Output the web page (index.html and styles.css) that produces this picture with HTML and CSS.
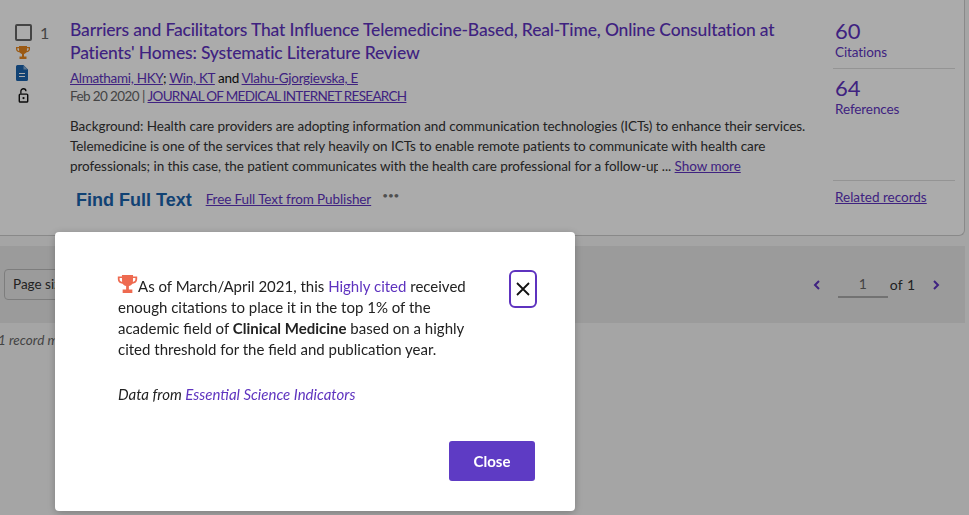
FILE: index.html
```html
<!DOCTYPE html>
<html lang="en">
<head>
    <meta charset="UTF-8">
    <meta name="viewport" content="width=device-width, initial-scale=1.0">
    <title>Highly cited record</title>
    <link rel="stylesheet" href="styles.css">
</head>
<body>
    <div class="record">
        <div class="record-marks">
            <div class="mark-top">
                <span class="checkbox"></span>
                <span class="record-no">1</span>
            </div>
            <svg class="mark-icon" width="14" height="13" viewBox="0 0 14 13"><path fill="#e8871e" d="M3 0h8v1h3v2c0 2-1.500 3-3.400 3.300C10 7.200 9 7.800 8 8v2.500h2.500V13h-7v-2.500H6V8c-1-.2-2-.8-2.600-1.700C1.500 6 0 5 0 3V1h3zM1.300 2.200V3c0 1 .7 1.700 1.800 2L3 2.200zM12.700 2.200H11L10.900 5c1.100-.3 1.800-1 1.800-2z"/></svg>
            <svg class="mark-icon" width="12" height="16" viewBox="0 0 12 16"><path fill="#1a63ad" d="M1.500 0H7.500L12 4.500V14.500A1.500 1.500 0 0 1 10.500 16H1.500A1.500 1.500 0 0 1 0 14.500V1.500A1.500 1.500 0 0 1 1.500 0z"/><path fill="none" stroke="#fff" stroke-width="1.200" d="M3 8.500H9M3 11.500H9"/><path fill="#fff" d="M7.500 0.500V4.500H11.500z" opacity=".5"/></svg>
            <svg class="mark-icon mark-lock" width="11" height="15" viewBox="0 0 11 16"><path fill="none" stroke="#111" stroke-width="1.400" d="M2.700 6V3.500a2.700 2.700 0 0 1 5.400 0"/><rect x="1" y="6.500" width="9" height="8.500" rx="1" fill="none" stroke="#111" stroke-width="1.500"/><circle cx="5.500" cy="10.700" r="1.200" fill="#111"/></svg>
        </div>
        <div class="record-main">
            <a class="record-title" href="#">Barriers and Facilitators That Influence Telemedicine-Based, Real-Time, Online Consultation at<br>Patients' Homes: Systematic Literature Review</a>
            <div class="authors"><a href="#">Almathami, HKY</a>; <a href="#">Win, KT</a> and <a href="#">Vlahu-Gjorgievska, E</a></div>
            <div class="pub-line">Feb 20 2020 | <a class="journal" href="#">JOURNAL OF MEDICAL INTERNET RESEARCH</a></div>
            <p class="abstract">Background: Health care providers are adopting information and communication technologies (ICTs) to enhance their services.<br>Telemedicine is one of the services that rely heavily on ICTs to enable remote patients to communicate with health care<br>professionals; in this case, the patient communicates with the health care professional for a follow-u<span class="cut">p</span> ... <a href="#">Show more</a></p>
            <div class="links">
                <span class="find-text">Find Full Text</span>
                <a href="#">Free Full Text from Publisher</a>
                <span class="more-dots">•••</span>
            </div>
        </div>
        <div class="record-stats">
            <div class="stat">
                <div class="stat-num">60</div>
                <div class="stat-label">Citations</div>
            </div>
            <div class="stat stat-tall">
                <div class="stat-num">64</div>
                <div class="stat-label">References</div>
            </div>
            <a class="related" href="#">Related records</a>
        </div>
    </div>

    <div class="pager-bar">
        <div class="page-size">Page size: 50</div>
        <div class="pager">
            <svg width="8" height="10" viewBox="0 0 8 10"><path fill="none" stroke="#5e33bf" stroke-width="2" d="M6 1L2 5l4 4"/></svg>
            <span class="page-input">1</span>
            <span class="page-of">of 1</span>
            <svg width="8" height="10" viewBox="0 0 8 10"><path fill="none" stroke="#5e33bf" stroke-width="2" d="M2 1l4 4-4 4"/></svg>
        </div>
    </div>
    <div class="matched">1 record matched</div>

    <div class="overlay"></div>
    <div class="modal">
        <div class="modal-top">
            <p class="modal-text"><svg class="modal-trophy" width="21" height="18" viewBox="0 0 14 13"><path fill="#ee6a50" d="M3 0h8v1h3v2c0 2-1.500 3-3.400 3.300C10 7.200 9 7.800 8 8v2.500h2.500V13h-7v-2.500H6V8c-1-.2-2-.8-2.600-1.700C1.500 6 0 5 0 3V1h3zM1.300 2.200V3c0 1 .7 1.700 1.800 2L3 2.200zM12.700 2.200H11L10.900 5c1.100-.3 1.800-1 1.800-2z"/></svg>As of March/April 2021, this <a href="#">Highly cited</a> received<br>enough citations to place it in the top 1% of the<br>academic field of <b>Clinical Medicine</b> based on a highly<br>cited threshold for the field and publication year.</p>
            <button class="modal-x"><svg width="14" height="14" viewBox="0 0 14 14"><path stroke="#111" stroke-width="1.800" d="M1 1l12 12M13 1L1 13"/></svg></button>
        </div>
        <p class="modal-source">Data from <a href="#">Essential Science Indicators</a></p>
        <div class="modal-foot">
            <button class="close-btn">Close</button>
        </div>
    </div>
</body>
</html>
```

FILE: styles.css
```css
body {
    font-family: Lato, "Noto Sans", sans-serif;
    font-size: 14px;
    color: #333;
    background-color: #f7f7f7;
    margin: 0;
    height: 515px;
    overflow: hidden;
}
a {
    color: #5e33bf;
}
.record {
    display: flex;
    width: 965px;
    height: 236px;
    box-sizing: border-box;
    background-color: #fff;
    border-bottom: 1px solid #ccc;
    border-right: 1px solid #ccc;
    border-radius: 0 0 6px 0;
    padding: 18px 10px 0 15px;
}
.record-marks {
    width: 55px;
    flex-shrink: 0;
    display: flex;
    flex-direction: column;
    align-items: flex-start;
}
.mark-top {
    display: flex;
    align-items: center;
    gap: 8px;
    margin-top: 6px;
    height: 16px;
}
.checkbox {
    width: 13px;
    height: 13px;
    border: 2px solid #666;
    border-radius: 2px;
}
.record-no {
    font-size: 16px;
    color: #666;
}
.mark-icon {
    display: block;
    margin: 6px 0 0 1px;
}
.mark-lock {
    margin: 7px 0 0 3px;
}
.record-main {
    width: 745px;
    flex-shrink: 0;
}
.record-title {
    display: block;
    font-size: 17.5px;
    letter-spacing: -0.16px;
    line-height: 23px;
    font-weight: 500;
    text-decoration: none;
}
.authors {
    margin-top: 5px;
    font-size: 13.5px;
    letter-spacing: -0.3px;
    line-height: 18px;
    color: #111;
}
.pub-line {
    font-size: 13.5px;
    letter-spacing: -0.6px;
    line-height: 18px;
    color: #666;
}
.journal {
    letter-spacing: -0.7px;
}
.abstract {
    margin: 11px 0 0;
    font-size: 13.5px;
    letter-spacing: -0.05px;
    line-height: 20px;
    white-space: nowrap;
}
.cut {
    display: inline-block;
    width: 5px;
    overflow: hidden;
    vertical-align: bottom;
}
.links {
    display: flex;
    align-items: center;
    gap: 14px;
    margin: 11px 0 0 6px;
    font-size: 13.5px;
    letter-spacing: -0.1px;
}
.find-text {
    font-family: "Liberation Sans", Arial, sans-serif;
    font-size: 18px;
    font-weight: bold;
    letter-spacing: 0;
    color: #1a63ad;
    margin-top: 3px;
}
.more-dots {
    font-size: 10px;
    color: #777;
    margin: 0 0 8px -3px;
}
.record-stats {
    width: 122px;
    margin-left: 18px;
    flex-shrink: 0;
    font-size: 13.5px;
}
.stat {
    height: 50px;
    border-bottom: 1px solid #ddd;
    margin-bottom: 6px;
}
.stat-tall {
    height: 105px;
    margin-bottom: 8px;
}
.stat-num {
    font-size: 22px;
    line-height: 25px;
    color: #5e33bf;
    padding-left: 2px;
}
.stat-label {
    line-height: 18px;
    letter-spacing: -0.1px;
    color: #5e33bf;
    padding-left: 2px;
}
.related {
    padding-left: 2px;
}
.pager-bar {
    display: flex;
    justify-content: space-between;
    align-items: center;
    width: 965px;
    height: 77px;
    margin-top: 10px;
    background-color: #e8e8e8;
    box-sizing: border-box;
    padding: 0 25px 0 4px;
}
.page-size {
    height: 31px;
    line-height: 29px;
    padding: 0 8px;
    font-size: 13.5px;
    border: 1px solid #bbb;
    border-radius: 4px;
    box-sizing: border-box;
}
.pager {
    display: flex;
    align-items: center;
}
.page-input {
    width: 50px;
    height: 24px;
    line-height: 24px;
    margin: 0 2px 0 17px;
    text-align: center;
    color: #666;
    border-bottom: 2px solid #aaa;
}
.page-of {
    word-spacing: 1px;
    margin-right: 17px;
}
.matched {
    margin-top: 9px;
    margin-left: -2px;
    width: 57px;
    overflow: hidden;
    white-space: nowrap;
    font-size: 13.5px;
    font-style: italic;
    color: #666;
}
.overlay {
    position: fixed;
    inset: 0;
    background-color: rgba(0, 0, 0, 0.33);
}
.modal {
    position: fixed;
    left: 55px;
    top: 232px;
    width: 520px;
    height: 279px;
    box-sizing: border-box;
    padding: 38px 38px 0 63px;
    background-color: #fff;
    border-radius: 4px;
    box-shadow: 0 2px 8px rgba(0, 0, 0, 0.25);
    color: #222;
    font-size: 15px;
}
.modal-top {
    display: flex;
    justify-content: space-between;
    align-items: flex-start;
}
.modal-text {
    margin: 5px 0 0;
    line-height: 21px;
    white-space: nowrap;
}
.modal-trophy {
    margin-left: -1px;
    vertical-align: -1px;
}
.modal-text a, .modal-source a {
    text-decoration: none;
}
.modal-x {
    display: flex;
    align-items: center;
    justify-content: center;
    width: 28px;
    height: 38px;
    padding: 0;
    background: #fff;
    border: 2px solid #5e33bf;
    border-radius: 6px;
}
.modal-source {
    margin: 25px 0 0;
    font-style: italic;
}
.modal-foot {
    display: flex;
    justify-content: flex-end;
    margin: 38px 2px 0 0;
}
.close-btn {
    width: 86px;
    height: 40px;
    background-color: #5e3bc4;
    color: #fff;
    border: none;
    border-radius: 3px;
    font-family: inherit;
    font-size: 15px;
    font-weight: bold;
}
```
